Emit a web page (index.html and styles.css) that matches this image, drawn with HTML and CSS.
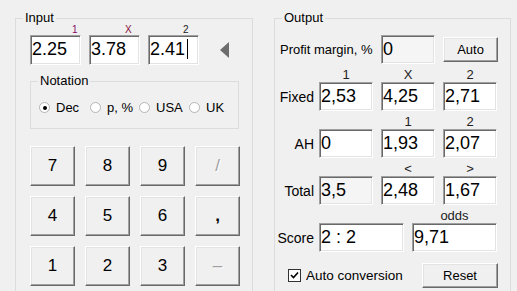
FILE: index.html
```html
<!DOCTYPE html>
<html lang="en">
<head>
    <meta charset="UTF-8">
    <title>Odds converter</title>
    <link rel="stylesheet" href="styles.css">
</head>
<body>
    <div class="app">
        <fieldset class="group group-input">
            <legend>Input</legend>
            <div class="input-body">
                <div class="odds-heads">
                    <span class="h-one">1</span>
                    <span class="h-x">X</span>
                    <span class="h-two">2</span>
                </div>
                <div class="odds-row">
                    <div class="field">2.25</div>
                    <div class="field">3.78</div>
                    <div class="field">2.41<span class="caret"></span></div>
                    <span class="arrow"></span>
                </div>

                <fieldset class="group notation">
                    <legend>Notation</legend>
                    <div class="radios">
                        <label class="radio checked"><span class="circle"></span>Dec</label>
                        <label class="radio"><span class="circle"></span>p, %</label>
                        <label class="radio"><span class="circle"></span>USA</label>
                        <label class="radio"><span class="circle"></span>UK</label>
                    </div>
                </fieldset>

                <div class="keypad">
                    <button class="btn key">7</button>
                    <button class="btn key">8</button>
                    <button class="btn key">9</button>
                    <button class="btn key" disabled>/</button>
                    <button class="btn key">4</button>
                    <button class="btn key">5</button>
                    <button class="btn key">6</button>
                    <button class="btn key comma">,</button>
                    <button class="btn key">1</button>
                    <button class="btn key">2</button>
                    <button class="btn key">3</button>
                    <button class="btn key" disabled>&ndash;</button>
                </div>
            </div>
        </fieldset>

        <fieldset class="group group-output">
            <legend>Output</legend>
            <div class="output-body">
                <div class="out-grid">
                    <span class="margin-label">Profit margin, %</span>
                    <div class="field readonly">0</div>
                    <button class="btn small auto">Auto</button>

                    <span class="head c2">1</span>
                    <span class="head c3">X</span>
                    <span class="head c4">2</span>

                    <span class="row-label">Fixed</span>
                    <div class="field">2,53</div>
                    <div class="field">4,25</div>
                    <div class="field">2,71</div>

                    <span class="head c3">1</span>
                    <span class="head c4">2</span>

                    <span class="row-label">AH</span>
                    <div class="field">0</div>
                    <div class="field">1,93</div>
                    <div class="field">2,07</div>

                    <span class="head c3">&lt;</span>
                    <span class="head c4">&gt;</span>

                    <span class="row-label">Total</span>
                    <div class="field readonly">3,5</div>
                    <div class="field">2,48</div>
                    <div class="field">1,67</div>

                    <div class="pair">
                        <span></span>
                        <span class="head wide">odds</span>
                    </div>

                    <span class="row-label">Score</span>
                    <div class="pair">
                        <div class="field wide">2 : 2</div>
                        <div class="field wide">9,71</div>
                    </div>
                </div>

                <div class="bottom-row">
                    <label class="check">
                        <span class="box">
                            <svg width="9" height="9" viewBox="0 0 9 9"><polyline points="1,4 3.5,6.5 8,1.5" fill="none" stroke="#000" stroke-width="1.6"/></svg>
                        </span>
                        Auto conversion
                    </label>
                    <button class="btn small reset">Reset</button>
                </div>
            </div>
        </fieldset>
    </div>
</body>
</html>
```

FILE: styles.css
```css
body {
    margin: 0;
    width: 517px;
    height: 291px;
    overflow: hidden;
    background-color: #f0f0f0;
    color: #000;
    font-family: "Liberation Sans", Arial, sans-serif;
    font-size: 13px;
}

.app {
    display: flex;
    gap: 21px;
    padding: 11px 0 0 15px;
}

.group {
    margin: 0;
    padding: 0;
    min-width: 0;
    border: 1px solid #dcdcdc;
}

.group legend {
    margin-left: 7px;
    padding: 0 2px;
    line-height: 14px;
}

.group-input {
    width: 238px;
    height: 300px;
    box-sizing: border-box;
}

.group-output {
    width: 237px;
    height: 300px;
    box-sizing: border-box;
}

/* text boxes */
.field {
    box-sizing: border-box;
    height: 29px;
    padding-left: 1px;
    background-color: #fff;
    border: 1px solid;
    border-color: #a0a0a0 #fff #fff #a0a0a0;
    box-shadow: inset 1px 1px #696969, inset -1px -1px #e3e3e3;
    font-size: 18px;
    line-height: 26px;
    white-space: nowrap;
}

.readonly {
    background-color: #f5f5f5;
}

/* buttons */
.btn {
    box-sizing: border-box;
    margin: 0;
    padding: 0;
    background-color: #f0f0f0;
    border: 1px solid;
    border-color: #fff #696969 #696969 #fff;
    box-shadow: inset -1px -1px #a0a0a0, inset 1px 1px #e3e3e3;
    font-family: "Liberation Sans", Arial, sans-serif;
    color: #000;
}

.btn:disabled {
    color: #a0a0a0;
    text-shadow: 1px 1px #fff;
}

/* input side */
.input-body {
    padding-left: 14px;
}

.odds-heads {
    display: grid;
    grid-template-columns: 51px 51px 51px;
    column-gap: 8px;
    height: 10px;
    margin-top: 0;
    font-size: 10px;
    line-height: 10px;
}

.h-one {
    padding-left: 42px;
    color: #8a0a6a;
}

.h-x {
    padding-left: 36px;
    color: #8a1040;
}

.h-two {
    padding-left: 35px;
    color: #202020;
}

.odds-row {
    display: flex;
    align-items: center;
    gap: 8px;
    margin-top: 0;
}

.odds-row .field {
    width: 51px;
    height: 30px;
    line-height: 27px;
}

.caret {
    display: inline-block;
    width: 1px;
    height: 20px;
    margin-left: 2px;
    vertical-align: -4px;
    background-color: #000;
}

.arrow {
    width: 0;
    height: 0;
    margin-left: 13px;
    border-top: 8px solid transparent;
    border-bottom: 8px solid transparent;
    border-right: 9px solid #6d6d6d;
}

.notation {
    width: 209px;
    height: 55px;
    margin-top: 9px;
    box-sizing: border-box;
}

.radios {
    display: grid;
    grid-template-columns: 51px 49px 50px auto;
    margin-top: 12px;
    padding-left: 8px;
    line-height: 15px;
}

.radio {
    display: flex;
    align-items: center;
}

.circle {
    box-sizing: border-box;
    width: 11px;
    height: 11px;
    margin-right: 6px;
    border: 1px solid #b4b4b4;
    border-radius: 50%;
    background-color: #fff;
    display: flex;
    align-items: center;
    justify-content: center;
}

.checked .circle::after {
    content: "";
    width: 4px;
    height: 4px;
    border-radius: 50%;
    background-color: #000;
}

.keypad {
    display: grid;
    grid-template-columns: repeat(4, 45px);
    grid-auto-rows: 40px;
    gap: 10px;
    margin-top: 17px;
}

.key {
    font-size: 17px;
}

.comma {
    font-weight: bold;
}

/* output side */
.output-body {
    padding-left: 5px;
}

.out-grid {
    display: grid;
    grid-template-columns: 39px 62px 62px 54px;
    grid-template-rows: 29px 18px 29px 18px 29px 18px 29px 18px 29px;
    align-items: center;
    margin-top: 10px;
}

.out-grid .field {
    width: 54px;
}

.margin-label {
    grid-column: 1 / 3;
}

.out-grid .auto {
    width: 55px;
    height: 25px;
}

.small {
    font-size: 13px;
}

.head {
    width: 54px;
    margin-top: 3px;
    text-align: center;
    color: #222;
    line-height: 14px;
}

.c2 { grid-column: 2; }
.c3 { grid-column: 3; }
.c4 { grid-column: 4; }

.row-label {
    grid-column: 1;
    justify-self: end;
    padding-right: 5px;
    font-size: 14px;
}

.pair {
    grid-column: 2 / 5;
    display: flex;
    justify-content: space-between;
}

.out-grid .wide {
    width: 85px;
}

.bottom-row {
    display: flex;
    align-items: center;
    width: 218px;
    margin-top: 11px;
}

.check {
    display: flex;
    align-items: center;
    gap: 5px;
    padding-left: 8px;
    font-size: 13.5px;
}

.box {
    box-sizing: border-box;
    width: 13px;
    height: 13px;
    border: 1px solid #333;
    background-color: #fff;
    display: flex;
    align-items: center;
    justify-content: center;
}

.reset {
    width: 76px;
    height: 25px;
    margin-left: auto;
}
```
